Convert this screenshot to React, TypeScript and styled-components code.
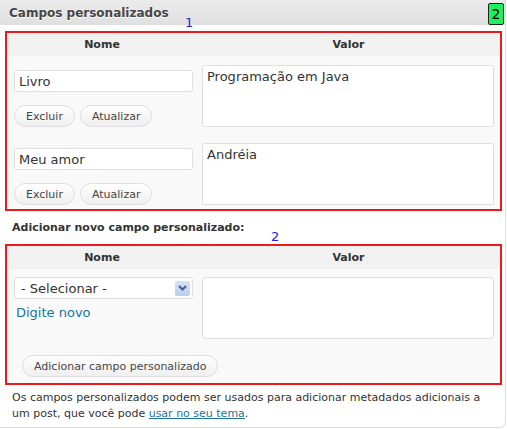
import React from "react";
import styled, { createGlobalStyle } from "styled-components";

const GlobalStyle = createGlobalStyle`
  body {
    margin: 0;
    background: #ffffff;
    font-family: "DejaVu Sans", Verdana, sans-serif;
    color: #333333;
  }
`;

type Field = {
  name: string;
  value: string;
};

const fields: Field[] = [
  { name: "Livro", value: "Programação em Java" },
  { name: "Meu amor", value: "Andréia" },
];

const Panel = styled.div`
  position: relative;
  width: 506px;
  height: 428px;
  box-sizing: border-box;
  border: 1px solid #dfdfdf;
  border-top: none;
  border-left: none;
  border-radius: 0 0 6px 0;
  background: #ffffff;
`;

const PanelHeader = styled.div`
  height: 25px;
  display: flex;
  align-items: center;
  padding-left: 9px;
  background: linear-gradient(to bottom, #ececec, #dfdfdf);
  font-size: 12px;
  font-weight: bold;
  color: #464646;
  text-shadow: 0 1px 0 #ffffff;
`;

const Marker = styled.span<{ $x: number; $y: number }>`
  position: absolute;
  left: ${(p) => p.$x}px;
  top: ${(p) => p.$y}px;
  font-size: 13px;
  line-height: 13px;
  color: #2222dd;
`;

const Badge = styled.div`
  position: absolute;
  right: 1px;
  top: 3px;
  width: 16px;
  height: 22px;
  box-sizing: border-box;
  border: 1px solid #222222;
  border-radius: 2px;
  background: #1ef060;
  color: #000000;
  font-size: 14px;
  display: flex;
  align-items: center;
  justify-content: center;
`;

const Body = styled.div`
  padding: 6px 5px 0 5px;
`;

const Box = styled.div`
  width: 497px;
  box-sizing: border-box;
  border: 2px solid #e81c1c;
  background: #f9f9f9;
`;

const HeadRow = styled.div`
  display: grid;
  grid-template-columns: 190px 303px;
  height: 23px;
  background: #f1f1f1;
  font-size: 11px;
  font-weight: bold;
  color: #333333;
`;

const HeadCell = styled.div`
  display: flex;
  align-items: center;
  justify-content: center;
`;

const Row = styled.div<{ $top: number; $bottom: number }>`
  display: grid;
  grid-template-columns: 190px 303px;
  padding: ${(p) => p.$top}px 0 ${(p) => p.$bottom}px 0;
`;

const LeftCell = styled.div<{ $offset: number }>`
  padding: ${(p) => p.$offset}px 0 0 7px;
  display: flex;
  flex-direction: column;
  align-items: flex-start;
`;

const RightCell = styled.div`
  padding-left: 5px;
`;

const TextInput = styled.div`
  width: 179px;
  height: 22px;
  box-sizing: border-box;
  border: 1px solid #dfdfdf;
  border-radius: 3px;
  background: #ffffff;
  font-size: 13px;
  color: #333333;
  padding: 0 4px;
  display: flex;
  align-items: center;
`;

const TextArea = styled.div`
  width: 292px;
  height: 62px;
  box-sizing: border-box;
  border: 1px solid #dfdfdf;
  border-radius: 3px;
  background: #ffffff;
  font-size: 13px;
  color: #333333;
  padding: 3px 4px;
`;

const Buttons = styled.div`
  display: flex;
  gap: 5px;
  margin-top: 13px;
`;

const PillButton = styled.button`
  height: 22px;
  box-sizing: border-box;
  padding: 0 11px;
  border: 1px solid #dfdfdf;
  border-radius: 11px;
  background: linear-gradient(to bottom, #ffffff, #efefef);
  font-family: "DejaVu Sans", Verdana, sans-serif;
  font-size: 11px;
  color: #464646;
  cursor: pointer;
`;

const SubTitle = styled.div`
  padding: 10px 0 9px 7px;
  font-size: 11px;
  line-height: 14px;
  font-weight: bold;
  color: #333333;
`;

const Select = styled.div`
  width: 179px;
  height: 22px;
  box-sizing: border-box;
  border: 1px solid #dfdfdf;
  border-radius: 3px;
  background: #ffffff;
  font-size: 13px;
  color: #333333;
  padding: 0 2px 0 6px;
  display: flex;
  align-items: center;
  justify-content: space-between;
`;

const SelectArrow = styled.div`
  width: 15px;
  height: 15px;
  border-radius: 2px;
  background: linear-gradient(to bottom, #d6e2fb, #b9cdf5);
  display: flex;
  align-items: center;
  justify-content: center;
`;

const NewLink = styled.a`
  margin: 6px 0 0 2px;
  font-size: 13px;
  color: #21759b;
  text-decoration: none;
`;

const AddRow = styled.div`
  padding: 16px 0 6px 15px;
  display: flex;
`;

const Footer = styled.p`
  margin: 0;
  padding: 5px 8px 0 7px;
  font-size: 11px;
  line-height: 16px;
  color: #333333;

  a {
    color: #21759b;
    text-decoration: underline;
  }
`;

function ChevronDown() {
  return (
    <svg width="9" height="6" viewBox="0 0 9 6">
      <path d="M1 1 L4.5 4.5 L8 1" fill="none" stroke="#4a5f86" strokeWidth="2" />
    </svg>
  );
}

function App() {
  return (
    <>
      <GlobalStyle />
      <Panel>
        <PanelHeader>Campos personalizados</PanelHeader>
        <Badge>2</Badge>
        <Marker $x={185} $y={16}>1</Marker>
        <Marker $x={271} $y={230}>2</Marker>
        <Body>
          <Box>
            <HeadRow>
              <HeadCell>Nome</HeadCell>
              <HeadCell>Valor</HeadCell>
            </HeadRow>
            {fields.map((f, i) => (
              <Row key={f.name} $top={9} $bottom={i === fields.length - 1 ? 4 : 7}>
                <LeftCell $offset={5}>
                  <TextInput>{f.name}</TextInput>
                  <Buttons>
                    <PillButton>Excluir</PillButton>
                    <PillButton>Atualizar</PillButton>
                  </Buttons>
                </LeftCell>
                <RightCell>
                  <TextArea>{f.value}</TextArea>
                </RightCell>
              </Row>
            ))}
          </Box>
          <SubTitle>Adicionar novo campo personalizado:</SubTitle>
          <Box>
            <HeadRow>
              <HeadCell>Nome</HeadCell>
              <HeadCell>Valor</HeadCell>
            </HeadRow>
            <Row $top={8} $bottom={0}>
              <LeftCell $offset={0}>
                <Select>
                  - Selecionar -
                  <SelectArrow>
                    <ChevronDown />
                  </SelectArrow>
                </Select>
                <NewLink href="#">Digite novo</NewLink>
              </LeftCell>
              <RightCell>
                <TextArea />
              </RightCell>
            </Row>
            <AddRow>
              <PillButton>Adicionar campo personalizado</PillButton>
            </AddRow>
          </Box>
          <Footer>
            Os campos personalizados podem ser usados para adicionar metadados adicionais a
            um post, que você pode <a href="#">usar no seu tema</a>.
          </Footer>
        </Body>
      </Panel>
    </>
  );
}

export default App;
